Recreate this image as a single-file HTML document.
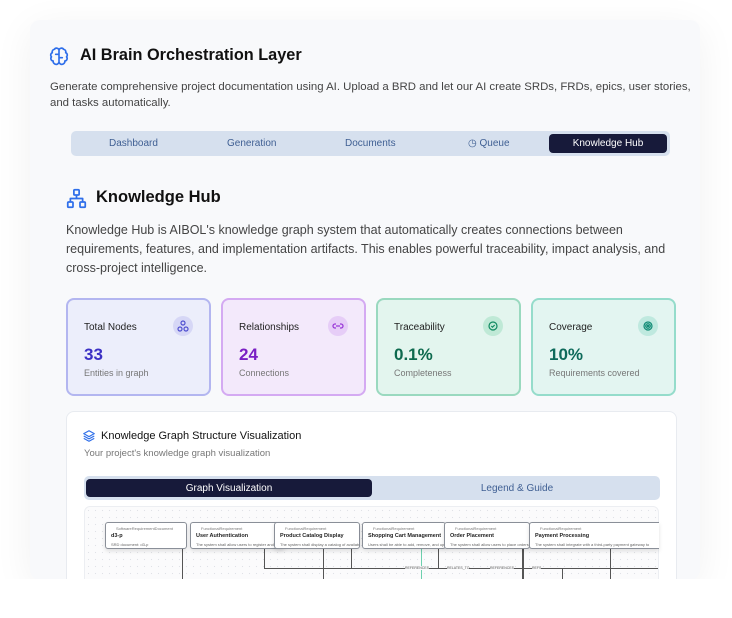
<!DOCTYPE html>
<html><head><meta charset="utf-8"><style>
*{box-sizing:border-box;margin:0;padding:0}
body{width:732px;height:618px;background:#fff;font-family:"Liberation Sans",sans-serif;position:relative;overflow:hidden}
.card{position:absolute;left:30px;top:20px;width:670px;height:560px;background:#f8f9fb;border-radius:10px;box-shadow:0 8px 40px rgba(0,0,0,0.06)}
.abs{position:absolute}
.title{left:80px;top:46px;font-size:16.3px;font-weight:bold;color:#111}
.desc{left:50px;top:79px;font-size:11.4px;line-height:16px;color:#444;white-space:nowrap}
.tabs{left:71px;top:131px;width:599px;height:25px;background:#d6e0ee;border-radius:5px}
.tab{position:absolute;top:0;line-height:25px;font-size:10px;color:#3f5f93}
.tab.on{left:478px;top:3px;width:118px;height:19px;background:#171a3a;color:#fff;border-radius:4px;text-align:center;line-height:19px}
.kh{left:96px;top:188px;font-size:16.5px;font-weight:bold;color:#111}
.khd{left:66px;top:221px;font-size:12.5px;line-height:19px;color:#444;width:620px}
.stat{position:absolute;top:298px;width:145px;height:98px;border-radius:8px;border:2px solid}
.stat .l{position:absolute;left:16px;top:22px;font-size:10px;color:#222}
.stat .v{position:absolute;left:16px;top:45px;font-size:17px;font-weight:bold}
.stat .s{position:absolute;left:16px;top:68px;font-size:9px;color:#777}
.stat .ic{position:absolute;right:16px;top:16px;width:20px;height:20px;border-radius:50%}
.panel{left:66px;top:411px;width:611px;height:180px;background:#fff;border-radius:8px;border:1px solid #e8ebf0}
.gv{left:84px;top:476px;width:576px;height:24px;background:#d6e0ee;border-radius:5px}
.graph{left:84px;top:506px;width:575px;height:90px;border:1px solid #eceef2;border-radius:6px;background-color:#fbfbfc;background-image:radial-gradient(#e0e2e6 0.6px,transparent 0.8px);background-size:7px 7px}
.node{position:absolute;top:522px;height:27px;background:#fff;border:1px solid #8a8f98;border-radius:3px;box-shadow:0 2px 4px rgba(0,0,0,0.12);overflow:hidden;white-space:nowrap}
.node .a{font-size:4px;color:#777;position:absolute;left:10px;top:3px}
.node .b{font-size:5.5px;font-weight:bold;color:#222;position:absolute;left:5px;top:10px}
.node .c{font-size:4px;color:#666;position:absolute;left:5px;top:19px}
.ln{position:absolute;background:#555}
.bottom{left:0;top:579px;width:732px;height:39px;background:#fff}
</style></head><body>
<div class="card"></div>
<svg class="abs" style="left:49px;top:46px" width="20" height="20" viewBox="0 0 24 24" fill="none" stroke="#2f6fea" stroke-width="2" stroke-linecap="round" stroke-linejoin="round"><path d="M12 4v16M12 5a3 3 0 0 0-5.5-1A3 3 0 0 0 4 8a3 3 0 0 0-1 5 3 3 0 0 0 2 5 3 3 0 0 0 7 1M12 5a3 3 0 0 1 5.5-1A3 3 0 0 1 20 8a3 3 0 0 1 1 5 3 3 0 0 1-2 5 3 3 0 0 1-7 1M8 10h4M12 14h4"/></svg>
<div class="abs title">AI Brain Orchestration Layer</div>
<div class="abs desc">Generate comprehensive project documentation using AI. Upload a BRD and let our AI create SRDs, FRDs, epics, user stories,<br>and tasks automatically.</div>
<div class="abs tabs">
<div class="tab" style="left:38px">Dashboard</div>
<div class="tab" style="left:156px">Generation</div>
<div class="tab" style="left:274px">Documents</div>
<div class="tab" style="left:397px">&#9719; Queue</div>
<div class="tab on">Knowledge Hub</div>
</div>
<svg class="abs" style="left:66px;top:188px" width="21" height="21" viewBox="0 0 24 24" fill="none" stroke="#2f6fea" stroke-width="2" stroke-linejoin="round"><rect x="9" y="2" width="6" height="6" rx="1"/><rect x="2" y="16" width="6" height="6" rx="1"/><rect x="16" y="16" width="6" height="6" rx="1"/><path d="M5 16v-4h14v4M12 8v4"/></svg>
<div class="abs kh">Knowledge Hub</div>
<div class="abs khd">Knowledge Hub is AIBOL's knowledge graph system that automatically creates connections between requirements, features, and implementation artifacts. This enables powerful traceability, impact analysis, and cross-project intelligence.</div>

<div class="stat" style="left:66px;background:#eceefb;border-color:#b3b6f0"><div class="l">Total Nodes</div><div class="v" style="color:#3b30c4">33</div><div class="s">Entities in graph</div><div class="ic" style="background:#d6d7f6"><svg width="20" height="20" viewBox="0 0 20 20" fill="none" stroke="#5050d0" stroke-width="1.2"><circle cx="10" cy="7" r="2"/><circle cx="7" cy="13" r="2"/><circle cx="13" cy="13" r="2"/></svg></div></div>
<div class="stat" style="left:221px;background:#f3e9fb;border-color:#d4aaf2"><div class="l">Relationships</div><div class="v" style="color:#7a1fc4">24</div><div class="s">Connections</div><div class="ic" style="background:#e6cdf7"><svg width="20" height="20" viewBox="0 0 20 20" fill="none" stroke="#9a3ad8" stroke-width="1.3"><path d="M8 8h-1a2 2 0 0 0 0 4h1M12 8h1a2 2 0 0 1 0 4h-1M8 10h4"/></svg></div></div>
<div class="stat" style="left:376px;background:#e3f5ee;border-color:#9ad9bf"><div class="l">Traceability</div><div class="v" style="color:#0d6a4e">0.1%</div><div class="s">Completeness</div><div class="ic" style="background:#bfe9d6"><svg width="20" height="20" viewBox="0 0 20 20" fill="none" stroke="#0f8a60" stroke-width="1.2"><circle cx="10" cy="10" r="4"/><path d="M8.3 10l1.2 1.2 2.2-2.2"/></svg></div></div>
<div class="stat" style="left:531px;background:#e3f5f1;border-color:#95dccb"><div class="l">Coverage</div><div class="v" style="color:#0d6a5a">10%</div><div class="s">Requirements covered</div><div class="ic" style="background:#bfe9df"><svg width="20" height="20" viewBox="0 0 20 20" fill="none" stroke="#0f8a74" stroke-width="1.2"><circle cx="10" cy="10" r="4"/><circle cx="10" cy="10" r="2.3"/><circle cx="10" cy="10" r="0.8"/></svg></div></div>

<div class="abs panel"></div>
<svg class="abs" style="left:82px;top:429px" width="14" height="14" viewBox="0 0 24 24" fill="none" stroke="#2f6fea" stroke-width="2" stroke-linejoin="round"><path d="M12 3l9 5-9 5-9-5z M3 12l9 5 9-5 M3 16l9 5 9-5"/></svg>
<div class="abs" style="left:101px;top:430px;font-size:11px;color:#111">Knowledge Graph Structure Visualization</div>
<div class="abs" style="left:84px;top:448px;font-size:9.5px;color:#777">Your project's knowledge graph visualization</div>
<div class="abs gv"><div class="abs" style="left:2px;top:3px;width:286px;height:18px;background:#171a3a;border-radius:4px;color:#fff;font-size:10px;text-align:center;line-height:19px">Graph Visualization</div><div class="abs" style="left:290px;top:3px;width:286px;height:18px;color:#3f5f93;font-size:10px;text-align:center;line-height:19px">Legend &amp; Guide</div></div>
<div class="abs graph"></div>
<div class="ln" style="left:182px;top:549px;width:1px;height:40px"></div>
<div class="ln" style="left:264px;top:549px;width:1px;height:20px"></div>
<div class="ln" style="left:264px;top:568px;width:394px;height:1px"></div>
<div class="ln" style="left:323px;top:549px;width:1px;height:40px"></div>
<div class="ln" style="left:351px;top:549px;width:1px;height:20px"></div>
<div class="ln" style="left:421px;top:549px;width:1px;height:40px;background:#6dd0ae"></div>
<div class="ln" style="left:438px;top:549px;width:1px;height:20px"></div>
<div class="ln" style="left:522px;top:549px;width:2px;height:40px"></div>
<div class="ln" style="left:562px;top:569px;width:1px;height:20px"></div>
<div class="ln" style="left:610px;top:549px;width:1px;height:40px"></div>
<div class="abs" style="left:405px;top:566px;font-size:3.5px;color:#555;background:#fbfbfc">REFERENCES</div>
<div class="abs" style="left:447px;top:566px;font-size:3.5px;color:#555;background:#fbfbfc">RELATES_TO</div>
<div class="abs" style="left:490px;top:566px;font-size:3.5px;color:#555;background:#fbfbfc">REFERENCES</div>
<div class="abs" style="left:532px;top:566px;font-size:3.5px;color:#555;background:#fbfbfc">REFS</div>
<div class="node" style="left:105px;width:82px"><div class="a">SoftwareRequirementDocument</div><div class="b">d3-p</div><div class="c">SRD document: d3-p</div></div>
<div class="node" style="left:190px;width:95px"><div class="a">FunctionalRequirement</div><div class="b">User Authentication</div><div class="c">The system shall allow users to register and</div></div>
<div class="node" style="left:274px;width:86px"><div class="a">FunctionalRequirement</div><div class="b">Product Catalog Display</div><div class="c">The system shall display a catalog of available</div></div>
<div class="node" style="left:362px;width:84px"><div class="a">FunctionalRequirement</div><div class="b">Shopping Cart Management</div><div class="c">Users shall be able to add, remove, and update</div></div>
<div class="node" style="left:444px;width:86px"><div class="a">FunctionalRequirement</div><div class="b">Order Placement</div><div class="c">The system shall allow users to place orders</div></div>
<div class="node" style="left:529px;width:130px;border-right:none;border-radius:3px 0 0 3px"><div class="a">FunctionalRequirement</div><div class="b">Payment Processing</div><div class="c">The system shall integrate with a third-party payment gateway to</div></div>
<div class="abs bottom"></div>
</body></html>
